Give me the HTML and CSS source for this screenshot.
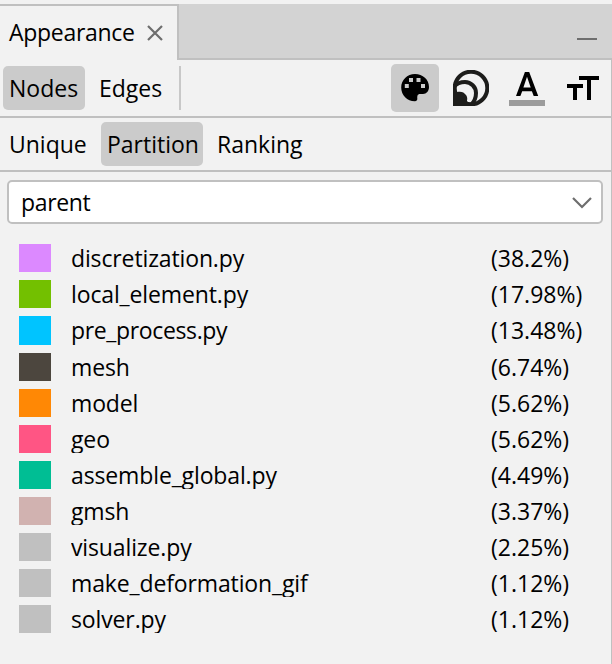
FILE: index.html
```html
<!DOCTYPE html>
<html lang="en">
<head>
<meta charset="utf-8">
<title>Appearance</title>
<link rel="stylesheet" href="styles.css">
</head>
<body>
<main class="panel">
  <header class="tabbar">
    <div class="tab"><span class="t-appearance">Appearance</span>
      <svg class="close" width="18" height="18" viewBox="0 0 18 18"><path d="M2 2L16 16M16 2L2 16"/></svg>
    </div>
    <div class="tabfill"><span class="minimize"></span></div>
  </header>
  <nav class="toolbar">
    <button class="btn nodes on"><span>Nodes</span></button>
    <button class="btn edges"><span>Edges</span></button>
    <i class="sep"></i>
    <div class="tools">
      <button class="tool on"><svg width="36" height="36" viewBox="0 0 36 36"><path fill-rule="evenodd" d="M18 4C10.200 4 4.200 10 4.200 17.500C4.200 25.200 10.200 31.200 17.800 31.200C19.800 31.200 20.500 30 20.300 28.300C20.200 26.200 20.400 24 23 24H26C29.500 24 32 21 32 17C32 9.500 25.800 4 18 4ZM12 8V12H16V8ZM19.500 8V12H23.500V8ZM7.800 14V18H11.800V14ZM24 14V18H28V14Z"/></svg></button>
      <button class="tool"><svg width="36" height="36" viewBox="0 0 36 36"><g fill="none" stroke="#1d1d1b" stroke-width="4"><circle cx="18" cy="18" r="16.300"/><path d="M1 17C4 13 8 12 12 12C18 12 23 17 23 23C23 28 21 32 18 35"/></g><path fill="#1d1d1b" d="M0 18L4 22C8 21 11 22 13 25C15 28 14 30 14 31L18 36H0Z"/></svg></button>
      <button class="tool"><svg width="36" height="36" viewBox="0 0 36 36"><path fill-rule="evenodd" d="M15.900 2H20.200L29.200 26H24.700L22.900 21.200H13.200L11.400 26H7ZM18 6.800L14.400 17.400H21.700Z"/><path fill="#9c9c9c" d="M0 30H36V36H0Z"/></svg></button>
      <button class="tool"><svg width="36" height="36" viewBox="0 0 36 36"><path d="M14 6H34V10H26V30H22V10H14ZM2 14H18V18H12V30H8V18H2Z"/></svg></button>
    </div>
  </nav>
  <nav class="modes">
    <button class="btn unique"><span>Unique</span></button>
    <button class="btn partition on"><span>Partition</span></button>
    <button class="btn ranking"><span>Ranking</span></button>
  </nav>
  <section class="content">
    <div class="combo"><span class="t-parent">parent</span>
      <svg width="20" height="12" viewBox="0 0 20 12"><path d="M1 1L10 10L19 1"/></svg>
    </div>
    <ul class="list">
      <li class="violet"><i></i><span class="name">discretization.py</span><span class="pct">(38.2%)</span></li>
      <li class="green"><i></i><span class="name">local_element.py</span><span class="pct">(17.98%)</span></li>
      <li class="blue tall"><i></i><span class="name">pre_process.py</span><span class="pct">(13.48%)</span></li>
      <li class="brown"><i></i><span class="name">mesh</span><span class="pct">(6.74%)</span></li>
      <li class="orange"><i></i><span class="name">model</span><span class="pct">(5.62%)</span></li>
      <li class="pink"><i></i><span class="name">geo</span><span class="pct">(5.62%)</span></li>
      <li class="teal"><i></i><span class="name">assemble_global.py</span><span class="pct">(4.49%)</span></li>
      <li class="rose"><i></i><span class="name">gmsh</span><span class="pct">(3.37%)</span></li>
      <li class="gray"><i></i><span class="name">visualize.py</span><span class="pct">(2.25%)</span></li>
      <li class="gray"><i></i><span class="name">make_deformation_gif</span><span class="pct">(1.12%)</span></li>
      <li class="gray"><i></i><span class="name">solver.py</span><span class="pct">(1.12%)</span></li>
    </ul>
  </section>
</main>
</body>
</html>
```
FILE: styles.css
```css
* { box-sizing: border-box; }
body {
  margin: 0;
  background: #f2f2f2;
  color: #000;
  font: 23px/28px "Open Sans", "Noto Sans", sans-serif;
}
button { font: inherit; color: inherit; border: 0; padding: 0; background: none; }
svg { display: block; flex: none; }
.panel { width: 612px; height: 664px; padding-top: 4px; overflow: hidden; }
.tabbar { display: flex; height: 56px; }
.tab {
  display: flex;
  align-items: center;
  width: 179px;
  padding: 0 0 2px 9px;
  border-top: 2px solid #c0c0c0;
  border-right: 2px solid #c0c0c0;
}
.tab span { width: 137px; white-space: nowrap; letter-spacing: -0.3px; }
.t-parent { letter-spacing: -0.35px; }
.close { margin-top: 2px; fill: none; stroke: #6e6e6e; stroke-width: 2.2; }
.tabfill {
  flex: 1;
  display: flex;
  justify-content: flex-end;
  padding: 34px 15px 0 0;
  background: #d3d3d3;
  border-bottom: 2px solid #c0c0c0;
}
.minimize { width: 20px; height: 2px; background: #6e6e6e; }
.toolbar, .modes {
  display: flex;
  align-items: center;
  border-right: 1px solid #c0c0c0;
  border-bottom: 2px solid #c0c0c0;
  white-space: nowrap;
}
.toolbar { height: 58px; padding: 0 4px 0 3px; }
.modes { height: 54px; padding-left: 3px; }
.btn { height: 44px; padding-left: 6px; text-align: left; border-radius: 5px; }
.btn.on, .tool.on { background: #cbcbcb; }
.nodes { width: 82px; }
.edges { width: 94px; padding-left: 14px; }
.unique { width: 98px; }
.partition { width: 102px; }
.ranking { width: 110px; padding-left: 14px; }
.sep { width: 2px; height: 44px; background: #c8c8c8; }
.tools { display: flex; gap: 8px; margin-left: auto; }
.tool { display: flex; align-items: center; justify-content: center; width: 48px; height: 48px; border-radius: 5px; }
.content { height: 492px; padding: 8px 8px 0 7px; border-right: 1px solid #c0c0c0; }
.combo {
  display: flex;
  align-items: center;
  justify-content: space-between;
  height: 44px;
  padding: 0 9px 0 12px;
  background: #fff;
  border: 2px solid #c0c0c0;
  border-radius: 5px;
}
.combo svg { margin-top: 2px; fill: none; stroke: #6e6e6e; stroke-width: 2.2; }
.list { list-style: none; margin: 20px 0 0; padding: 0 0 0 12px; display: grid; gap: 8px; }
.list li { display: grid; grid-template-columns: 32px 400px 100px; column-gap: 20px; height: 28px; }
.list i { background: var(--swatch); }
.name, .pct { white-space: nowrap; }
.name { overflow: hidden; letter-spacing: -0.13px; }
.list .tall { height: 29px; line-height: 29px; }
.tall .name { letter-spacing: -0.36px; }
.violet { --swatch: #dc89ff; }
.green { --swatch: #73c000; }
.blue { --swatch: #00c4ff; }
.brown { --swatch: #4c463e; }
.orange { --swatch: #ff8805; }
.pink { --swatch: #ff5584; }
.teal { --swatch: #00be94; }
.rose { --swatch: #d1b2b0; }
.gray { --swatch: #c0c0c0; }
```
